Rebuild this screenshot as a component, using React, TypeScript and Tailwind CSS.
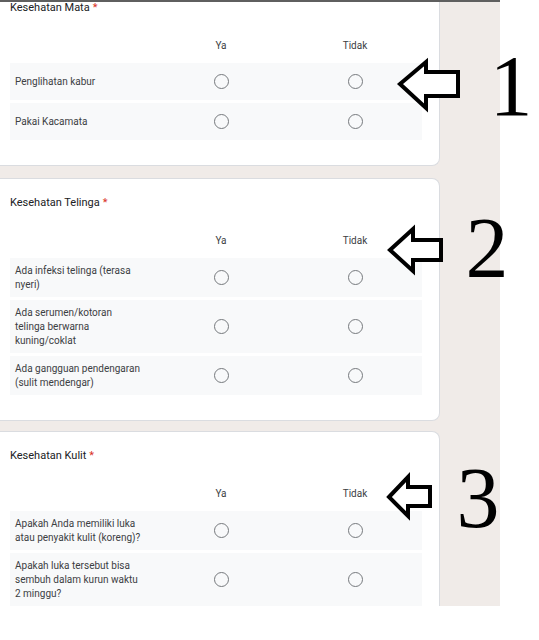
import React from "react";

type Row = string[];

function Radio() {
  return <div className="mx-auto w-[15px] h-[15px] rounded-full border-[1.5px] border-[#76797d] bg-transparent" />;
}

function Card({
  title,
  rows,
  first,
  className,
}: {
  title: string;
  rows: Row[];
  first?: boolean;
  className?: string;
}) {
  return (
    <div
      className={
        "shrink-0 w-[440px] bg-white border-r border-b border-[#dadce0] pl-[10px] pb-[25px] " +
        (first ? "rounded-br-lg " : "border-t rounded-r-lg pt-[16px] ") +
        (className ?? "")
      }
    >
      <div className={"text-[11px] leading-[16px] text-[#202124] " + (first ? "-mt-[2px]" : "")}>
        {title}
        <span className="text-[#d93025] ml-[3px]">*</span>
      </div>
      <div className="mt-[23px] grid grid-cols-[144px_134px_134px] text-[10px] leading-[14px] text-[#3c4043] text-center">
        <div />
        <div>Ya</div>
        <div>Tidak</div>
      </div>
      <div className="mt-[10px] flex flex-col gap-[3px] w-[412px]">
        {rows.map((lines, i) => (
          <div
            key={i}
            className="grid grid-cols-[144px_134px_134px] items-center min-h-[37px] py-[5.5px] bg-[#f8f9fa]"
          >
            <div className="pl-[5px] text-[10px] leading-[14px] text-[#3c4043]">
              {lines.map((l, j) => (
                <div key={j} className="whitespace-nowrap">
                  {l}
                </div>
              ))}
            </div>
            <Radio />
            <Radio />
          </div>
        ))}
      </div>
    </div>
  );
}

export default function App() {
  return (
    <div className="relative w-[539px] h-[640px] bg-white overflow-hidden font-['Roboto','Liberation_Sans',sans-serif]">
      <div className="w-[500px] h-[606px] bg-[#f0ebe8] overflow-hidden flex flex-col">
        <div className="shrink-0 h-[2px] bg-[#5f5f5f] relative z-10" />
        <Card
          first
          title="Kesehatan Mata"
          rows={[["Penglihatan kabur"], ["Pakai Kacamata"]]}
        />
        <Card
          className="mt-[12px]"
          title="Kesehatan Telinga"
          rows={[
            ["Ada infeksi telinga (terasa", "nyeri)"],
            ["Ada serumen/kotoran", "telinga berwarna", "kuning/coklat"],
            ["Ada gangguan pendengaran", "(sulit mendengar)"],
          ]}
        />
        <Card
          className="mt-[10px]"
          title="Kesehatan Kulit"
          rows={[
            ["Apakah Anda memiliki luka", "atau penyakit kulit (koreng)?"],
            ["Apakah luka tersebut bisa", "sembuh dalam kurun waktu", "2 minggu?"],
          ]}
        />
      </div>
      <svg
        className="absolute left-0 top-0 pointer-events-none"
        width="539"
        height="640"
        viewBox="0 0 539 640"
      >
        <g fill="white" stroke="black" strokeWidth="4" strokeLinejoin="miter">
          <polygon points="400,84 426,62 426,72 458,72 458,96 426,96 426,108" />
          <polygon points="390,250 413,229 413,240 441,240 441,260 413,260 413,271" />
          <polygon points="389,497 408,477 408,487 430,487 430,506 408,506 408,516" />
        </g>
        <g fontFamily="'Liberation Serif', 'Times New Roman', serif" fontSize="86" fill="black" textAnchor="middle">
          <text x="511" y="115">1</text>
          <text x="487" y="277">2</text>
          <text x="478" y="527">3</text>
        </g>
      </svg>
    </div>
  );
}
